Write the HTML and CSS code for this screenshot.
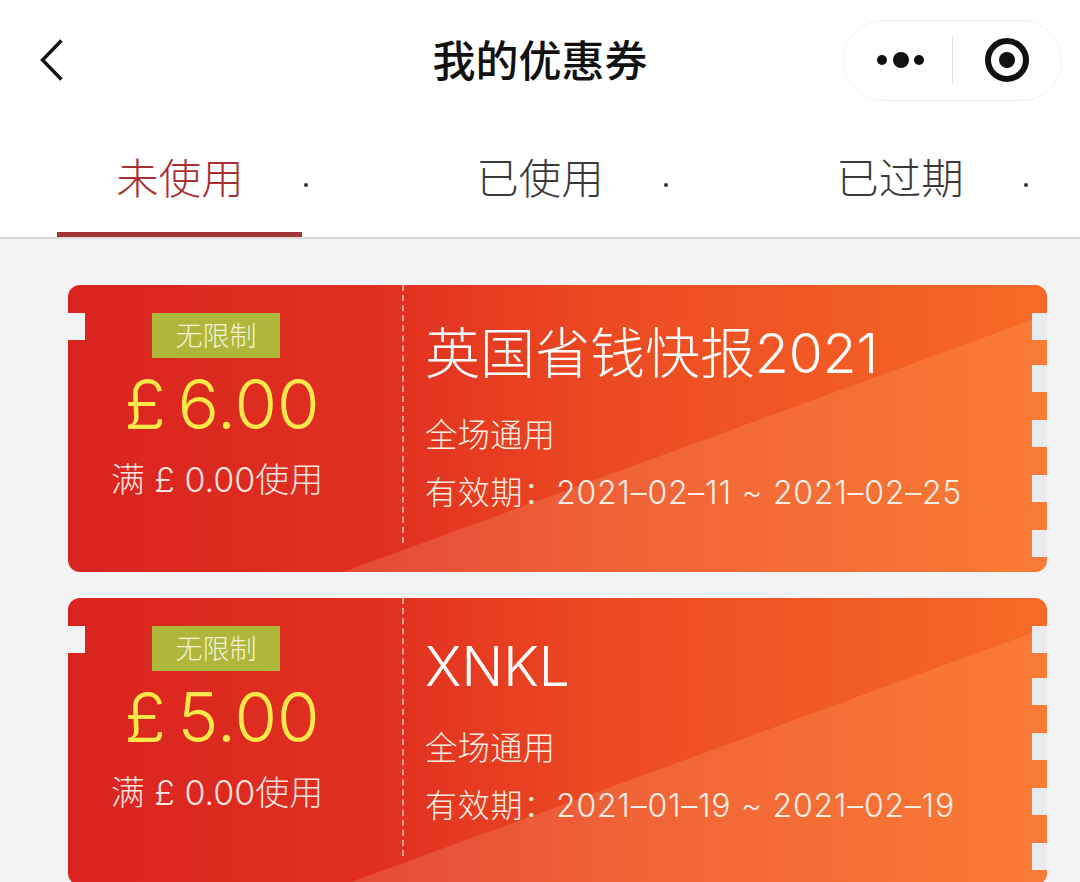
FILE: index.html
```html
<!DOCTYPE html>
<html lang="zh-CN">
<head>
    <meta charset="UTF-8">
    <meta name="viewport" content="width=device-width, initial-scale=1.0">
    <title>我的优惠券</title>
    <link rel="stylesheet" href="styles.css">
</head>
<body>
    <header class="navbar">
        <div class="navbar-left">
            <svg class="back-icon" width="26" height="44" viewBox="0 0 26 44">
                <path d="M22.5 2.5 L3.5 22 L22.5 41.5" fill="none" stroke="#111" stroke-width="3.4"/>
            </svg>
        </div>
        <h1 class="navbar-title">我的优惠券</h1>
        <div class="capsule">
            <svg class="capsule-more" width="50" height="18" viewBox="0 0 50 18">
                <circle cx="6" cy="9" r="5" fill="#111"/>
                <circle cx="25" cy="9" r="8" fill="#111"/>
                <circle cx="43" cy="9" r="5" fill="#111"/>
            </svg>
            <span class="capsule-line"></span>
            <svg class="capsule-close" width="46" height="46" viewBox="0 0 46 46">
                <circle cx="23" cy="23" r="19" fill="none" stroke="#111" stroke-width="6"/>
                <circle cx="23" cy="23" r="8" fill="#111"/>
            </svg>
        </div>
    </header>

    <nav class="tabs">
        <div class="tab active"><span class="tab-text">未使用</span><i class="tab-dot"></i></div>
        <div class="tab"><span class="tab-text">已使用</span><i class="tab-dot"></i></div>
        <div class="tab"><span class="tab-text">已过期</span><i class="tab-dot"></i></div>
    </nav>

    <main class="list">
        <div class="coupon">
            <div class="coupon-shine"></div>
            <div class="coupon-left">
                <span class="coupon-tag">无限制</span>
                <div class="coupon-price">£ 6.00</div>
                <div class="coupon-limit">满 £ 0.00使用</div>
            </div>
            <div class="coupon-right">
                <div class="coupon-name">英国省钱快报2021</div>
                <div class="coupon-scope">全场通用</div>
                <div class="coupon-date">有效期：2021–02–11 ~ 2021–02–25</div>
            </div>
            <div class="notch-left"></div>
            <div class="notch-right"><i></i><i></i><i></i><i></i><i></i></div>
        </div>
        <div class="coupon">
            <div class="coupon-shine"></div>
            <div class="coupon-left">
                <span class="coupon-tag">无限制</span>
                <div class="coupon-price">£ 5.00</div>
                <div class="coupon-limit">满 £ 0.00使用</div>
            </div>
            <div class="coupon-right">
                <div class="coupon-name">XNKL</div>
                <div class="coupon-scope">全场通用</div>
                <div class="coupon-date">有效期：2021–01–19 ~ 2021–02–19</div>
            </div>
            <div class="notch-left"></div>
            <div class="notch-right"><i></i><i></i><i></i><i></i><i></i></div>
        </div>
    </main>
</body>
</html>
```

FILE: styles.css
```css
*{
    margin: 0;
    padding: 0;
    box-sizing: border-box;
}

html,body{
    height: 882px;
    overflow: hidden;
}

body{
    background-color: #f3f3f4;
    font-family: "Noto Sans CJK SC", sans-serif;
}

/* top bar */
.navbar{
    height: 120px;
    background-color: #fff;
    display: grid;
    grid-template-columns: 1fr auto 1fr;
    align-items: center;
}

.navbar-left{
    padding-left: 39px;
    display: flex;
}

.navbar-title{
    font-size: 43px;
    font-weight: 500;
    line-height: 116px;
    height: 120px;
    color: #111;
}

.capsule{
    justify-self: end;
    margin-right: 18px;
    width: 219px;
    height: 81px;
    border: 1px solid #f1f1f1;
    border-radius: 41px;
    display: flex;
    align-items: center;
    padding-left: 32px;
}

.capsule-line{
    width: 1px;
    height: 46px;
    background-color: #ddd;
    margin-left: 26px;
}

.capsule-close{
    margin-left: 31px;
}

/* tabs */
.tabs{
    height: 119px;
    background-color: #fff;
    border-bottom: 2px solid #d9d9d9;
    display: grid;
    grid-template-columns: repeat(3, 360px);
}

.tab{
    display: flex;
    align-items: flex-start;
    justify-content: center;
    padding-top: 23px;
    position: relative;
    font-size: 42.5px;
    line-height: 66px;
    color: #3a3a3a;
    font-weight: 300;
}

.tab-dot{
    position: absolute;
    left: 304px;
    top: 63px;
    width: 4px;
    height: 4px;
    border-radius: 50%;
    background-color: #333;
}

.tab.active{
    color: #a82f33;
}

.tab.active::after{
    content: "";
    position: absolute;
    left: 57px;
    bottom: 0;
    width: 245px;
    height: 5px;
    background-color: #a33537;
}

/* coupons */
.list{
    padding: 46px 33px 0 68px;
    display: flex;
    flex-direction: column;
    gap: 26px;
}

.coupon{
    flex: none;
    height: 287px;
    border-radius: 12px;
    position: relative;
    overflow: hidden;
    display: flex;
    align-items: flex-start;
    color: #fff;
    background: linear-gradient(90deg, #d9241f 0%, #e1301f 32%, #ec4a22 55%, #f86a26 100%);
}

.coupon-shine{
    position: absolute;
    inset: 0;
    background: linear-gradient(90deg, rgba(255,235,215,.15), rgba(255,190,110,.2));
    clip-path: polygon(275px 287px, 964px 35px, 979px 35px, 979px 287px);
}

.coupon-left{
    position: relative;
    width: 336px;
    height: 258px;
    padding: 28px 38px 0 0;
    border-right: 2px dashed rgba(255,255,255,.55);
    display: flex;
    flex-direction: column;
    align-items: center;
}

.coupon-tag{
    width: 128px;
    height: 45px;
    background-color: #aeb73a;
    font-size: 27px;
    font-weight: 300;
    line-height: 43px;
    text-align: center;
    color: #f3f3dc;
}

.coupon-price{
    font-family: "Inter", sans-serif;
    font-size: 69px;
    font-weight: 350;
    word-spacing: -8px;
    line-height: 90px;
    margin: 1px 0 0 12px;
    color: #ffe94a;
    white-space: nowrap;
}

.coupon-limit{
    margin: 8px 0 0 2px;
    font-family: "Inter", "Noto Sans CJK SC", sans-serif;
    font-size: 34px;
    font-weight: 300;
    line-height: 46px;
    color: #fbe3e0;
    white-space: nowrap;
}

.coupon-right{
    position: relative;
    padding: 32px 0 0 21px;
}

.coupon-name{
    font-family: "Inter", "Noto Sans CJK SC", sans-serif;
    font-size: 55px;
    font-weight: 300;
    line-height: 72px;
    white-space: nowrap;
}

.coupon-scope{
    margin-top: 21px;
    font-size: 32.5px;
    font-weight: 300;
    line-height: 46px;
    color: #fdeee6;
}

.coupon-date{
    margin-top: 14px;
    font-family: "Inter", "Noto Sans CJK SC", sans-serif;
    font-size: 32px;
    font-weight: 300;
    letter-spacing: .75px;
    line-height: 46px;
    color: #fdeee6;
    white-space: nowrap;
}

.notch-left{
    position: absolute;
    left: 0;
    top: 28px;
    width: 17px;
    height: 27px;
    background-color: #f2f2f3;
}

.notch-right{
    position: absolute;
    right: 0;
    top: 28px;
    display: flex;
    flex-direction: column;
    gap: 28px;
}

.notch-right i{
    display: block;
    width: 15px;
    height: 27px;
    background-color: #eaebee;
}

.notch-right i:first-child{
    margin-bottom: -3px;
}
```
